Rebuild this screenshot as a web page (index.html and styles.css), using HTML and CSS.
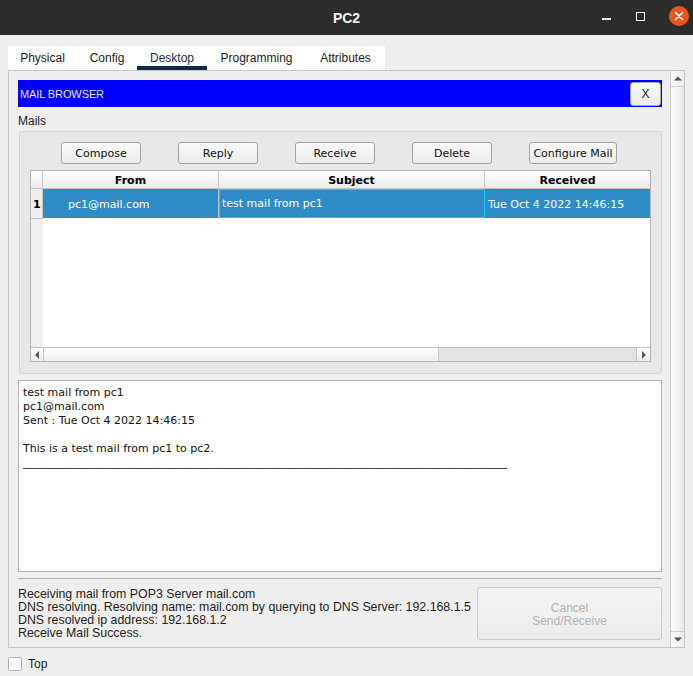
FILE: index.html
```html
<!DOCTYPE html>
<html>
<head>
<meta charset="utf-8">
<link rel="stylesheet" href="styles.css">
</head>
<body>
<div class="window">
  <header class="titlebar">
    <div class="title">PC2</div>
    <div class="wctrls">
      <span class="wmin"></span>
      <span class="wmax"></span>
      <span class="wclose"><svg width="20" height="20" viewBox="0 0 20 20"><circle cx="10" cy="10" r="10" fill="#e95420"/><path d="M6.5 6.5 L13.5 13.5 M13.5 6.5 L6.5 13.5" stroke="#fff" stroke-width="1.6" stroke-linecap="round"/></svg></span>
    </div>
  </header>
  <main class="main">
    <nav class="tabs">
      <div class="tab w1">Physical</div>
      <div class="tab w2">Config</div>
      <div class="tab w3 active">Desktop</div>
      <div class="tab w4">Programming</div>
      <div class="tab w5">Attributes</div>
    </nav>
    <section class="panel">
      <div class="content">
        <div class="mbar">
          <span class="mtitle">MAIL BROWSER</span>
          <span class="xbtn">X</span>
        </div>
        <div class="label">Mails</div>
        <div class="group">
          <div class="btnrow">
            <span class="btn">Compose</span>
            <span class="btn">Reply</span>
            <span class="btn">Receive</span>
            <span class="btn">Delete</span>
            <span class="btn wide">Configure Mail</span>
          </div>
          <div class="table">
            <div class="thead">
              <div class="hc rh"></div>
              <div class="hc c1">From</div>
              <div class="hc c2">Subject</div>
              <div class="hc c3">Received</div>
            </div>
            <div class="trow">
              <div class="rh num">1</div>
              <div class="cell c1 from">pc1@mail.com</div>
              <div class="cell c2 focus">test mail from pc1</div>
              <div class="cell c3">Tue Oct 4 2022 14:46:15</div>
            </div>
            <div class="tbody"><div class="rhcol"></div></div>
            <div class="hscroll">
              <div class="harrow left"><svg width="5" height="8" viewBox="0 0 5 8"><path d="M4 0 L0 4 L4 8 Z" fill="#555"/></svg></div>
              <div class="hhandle"></div>
              <div class="hgroove"></div>
              <div class="harrow right"><svg width="5" height="8" viewBox="0 0 5 8"><path d="M1 0 L5 4 L1 8 Z" fill="#555"/></svg></div>
            </div>
          </div>
        </div>
        <div class="mailtext">
          <div>test mail from pc1</div>
          <div>pc1@mail.com</div>
          <div>Sent : Tue Oct 4 2022 14:46:15</div>
          <div>&nbsp;</div>
          <div>This is a test mail from pc1 to pc2.</div>
          <div>________________________________________________________________________________________</div>
        </div>
        <div class="sep"></div>
        <div class="logrow">
          <div class="log">
            <div>Receiving mail from POP3 Server mail.com</div>
            <div>DNS resolving. Resolving name: mail.com by querying to DNS Server: 192.168.1.5</div>
            <div>DNS resolved ip address: 192.168.1.2</div>
            <div>Receive Mail Success.</div>
          </div>
          <div class="cancel">Cancel<br>Send/Receive</div>
        </div>
      </div>
      <div class="vscroll">
        <div class="varrow"><svg width="8" height="5" viewBox="0 0 8 5"><path d="M0 4.5 L4 0.5 L8 4.5 Z" fill="#555"/></svg></div>
        <div class="vhandle"></div>
        <div class="varrow bottom"><svg width="8" height="5" viewBox="0 0 8 5"><path d="M0 0.5 L4 4.5 L8 0.5 Z" fill="#555"/></svg></div>
      </div>
    </section>
    <div class="topline">
      <span class="chk"></span>
      <span class="toplabel">Top</span>
    </div>
  </main>
</div>
</body>
</html>
```
FILE: styles.css
```css
* { box-sizing: border-box; }
html, body { margin: 0; padding: 0; }
body {
  width: 693px;
  height: 676px;
  overflow: hidden;
  background: #efefef;
  font-family: "Liberation Sans", Arial, sans-serif;
  font-size: 12px;
  color: #1e1e1e;
}
.window { width: 693px; height: 676px; display: flex; flex-direction: column; }

.titlebar {
  height: 35px;
  background: #2c2c2c;
  display: flex;
  align-items: center;
  justify-content: center;
  position: relative;
}
.title { color: #f2f2f2; font-weight: bold; font-size: 14px; padding-top: 1px; }
.wctrls {
  position: absolute;
  right: 4px;
  top: 6px;
  display: flex;
  align-items: center;
  height: 20px;
}
.wmin { width: 9px; height: 1.5px; background: #eee; margin-right: 25px; margin-top: 6px; }
.wmax { width: 9px; height: 9px; border: 1.5px solid #eee; margin-right: 24px; }
.wclose { width: 20px; height: 20px; display: block; }
.wclose svg { display: block; }

.main { padding: 11px 8px 0 8px; display: flex; flex-direction: column; }

.tabs { display: flex; height: 24px; background: #fff; width: 377px; }
.tab {
  height: 24px;
  line-height: 22px;
  padding-top: 1px;
  text-align: center;
  font-size: 12px;
  color: #1c1c1c;
  white-space: nowrap;
}
.w1 { width: 69px; } .w2 { width: 60px; } .w3 { width: 70px; } .w4 { width: 99px; } .w5 { width: 79px; }
.tab.active { border-bottom: 4px solid #10284a; color: #1d2b3c; }

.panel {
  height: 578px;
  border: 1px solid #c6c6c6;
  display: flex;
}
.content { width: 661px; padding: 9px 8px 0 9px; display: flex; flex-direction: column; }

.mbar {
  height: 27px;
  background: #0000ff;
  display: flex;
  align-items: center;
  justify-content: space-between;
  padding: 0 1px 0 2px;
}
.mtitle { color: #e8e8ff; font-size: 11px; padding-top: 1px; letter-spacing: -0.1px; }
.xbtn {
  width: 31px;
  height: 24px;
  background: linear-gradient(#f8f8f8, #ececec);
  border: 1px solid #a8a8a8;
  border-radius: 3px;
  text-align: center;
  line-height: 23px;
  font-size: 12px;
  color: #222;
}

.label { height: 24px; padding-top: 5px; line-height: 18px; font-size: 12px; color: #1e1e1e; }

.group {
  height: 243px;
  margin-left: 1px;
  width: 643px;
  background: #e8e8e8;
  border: 1px solid #d6d6d6;
  border-radius: 2px;
  padding: 10px 0 0 10px;
  display: flex;
  flex-direction: column;
}
.btnrow { display: flex; gap: 37px; padding-left: 31px; height: 22px; }
.btn {
  width: 80px;
  height: 22px;
  border: 1px solid #a4a4a4;
  border-radius: 3px;
  background: linear-gradient(#fafafa, #ebebeb);
  font-family: "DejaVu Sans", sans-serif;
  font-size: 11px;
  color: #111;
  text-align: center;
  line-height: 20px;
  padding-top: 1px;
}
.btn.wide { width: 88px; }

.table {
  margin-top: 6px;
  width: 621px;
  height: 192px;
  border: 1px solid #b6b6b6;
  background: #fff;
  display: flex;
  flex-direction: column;
  font-family: "DejaVu Sans", sans-serif;
  font-size: 11px;
}
.thead { display: flex; height: 18px; border-bottom: 1px solid #c4c4c4; }
.hc {
  height: 17px;
  background: linear-gradient(#fefefe, #ececec);
  font-weight: bold;
  color: #000;
  text-align: center;
  line-height: 17px;
  padding-top: 1px;
  border-right: 1px solid #c8c8c8;
}
.rh { width: 12px; flex: none; }
.c1 { width: 176px; flex: none; }
.c2 { width: 266px; flex: none; }
.c3 { width: 165px; flex: none; border-right: none; }

.trow { display: flex; height: 30px; }
.num {
  background: #efefef;
  border-right: 1px solid #c8c8c8;
  border-bottom: 1px solid #c4c4c4;
  font-weight: bold;
  color: #000;
  line-height: 29px;
  padding-top: 1px;
  padding-left: 2px;
}
.cell {
  background: #308cc6;
  color: #fff;
  height: 29px;
  line-height: 29px;
  padding-top: 1px;
  border-right: 1px solid #c0c0c0;
  padding-left: 3px;
  white-space: nowrap;
  overflow: hidden;
}
.cell.c3 { border-right: none; padding-left: 3px; }
.cell.from { padding-left: 25px; }
.cell.focus { border: 1px solid #22c8f4; line-height: 26px; padding-left: 2px; }

.tbody { flex: 1; display: flex; }
.rhcol { width: 12px; background: #f0f0f0; }

.hscroll { height: 14px; border-top: 1px solid #c2c2c2; display: flex; }
.harrow {
  width: 13px;
  background: linear-gradient(#fcfcfc, #ececec);
  display: flex;
  align-items: center;
  justify-content: center;
}
.harrow.left { border-right: 1px solid #c4c4c4; }
.harrow.right { border-left: 1px solid #c4c4c4; width: 14px; }
.hhandle { width: 395px; background: linear-gradient(#fdfdfd, #efefef); border-right: 1px solid #c8c8c8; }
.hgroove { flex: 1; background: #e3e3e3; }

.mailtext {
  margin-top: 6px;
  height: 192px;
  background: #fff;
  border: 1px solid #b4b4b4;
  padding: 5px 4px 0 4px;
  font-family: "DejaVu Sans", sans-serif;
  font-size: 11px;
  line-height: 14px;
  color: #111;
  white-space: nowrap;
  overflow: hidden;
}

.sep { margin-top: 6px; height: 1px; background: #b0b0b0; }

.logrow {
  height: 68px;
  display: flex;
  justify-content: space-between;
  align-items: flex-start;
  padding-top: 8px;
}
.log { font-size: 12.35px; line-height: 13px; padding-top: 1px; color: #1e1e1e; white-space: nowrap; }
.cancel {
  width: 185px;
  height: 53px;
  border: 1px solid #cbcbcb;
  border-radius: 3px;
  background: linear-gradient(#f5f5f5, #ececec);
  color: #b4b4b4;
  text-align: center;
  font-size: 12px;
  line-height: 13px;
  padding-top: 14px;
}

.vscroll {
  width: 15px;
  border-left: 1px solid #cacaca;
  display: flex;
  flex-direction: column;
  background: #f0f0f0;
}
.varrow {
  height: 16px;
  display: flex;
  align-items: center;
  justify-content: center;
  background: linear-gradient(90deg, #fbfbfb, #ececec);
  border-bottom: 1px solid #cfcfcf;
}
.varrow.bottom { border-bottom: none; border-top: 1px solid #cfcfcf; }
.vhandle { flex: 1; background: linear-gradient(90deg, #fdfdfd, #e9e9e9); }

.topline { display: flex; align-items: center; margin-top: 8px; height: 15px; }
.chk {
  width: 14px;
  height: 14px;
  background: #fff;
  border: 1px solid #b0b0b0;
  border-radius: 2px;
}
.toplabel { margin-left: 6px; font-size: 12px; color: #1e1e1e; }
```
